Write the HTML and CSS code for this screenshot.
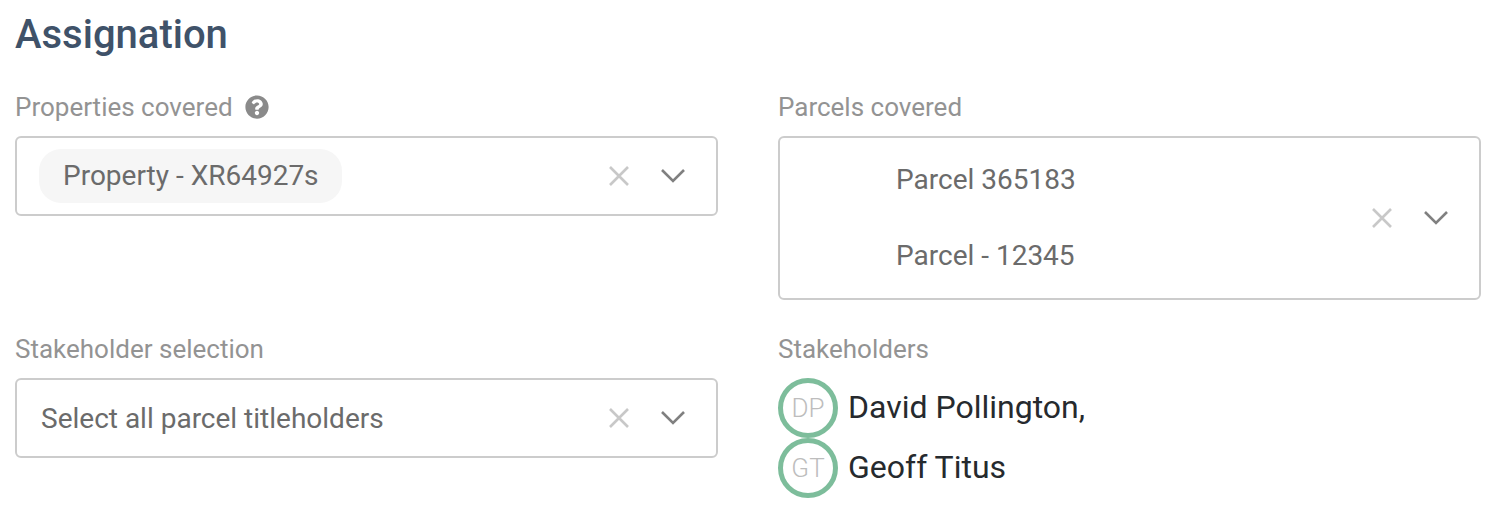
FILE: index.html
```html
<!DOCTYPE html>
<html lang="en">

<head>
    <meta charset="UTF-8">
    <title>Assignation</title>
    <link rel="stylesheet" href="styles.css">
</head>

<body>
    <h2 class="section-title">Assignation</h2>

    <div class="form-grid">
        <div class="field">
            <div class="field-label">
                Properties covered
                <svg class="help-icon" viewBox="0 0 512 512" width="24" height="24">
                    <path fill="#8a8a8a" d="M504 256c0 136.997-111.043 248-248 248S8 392.997 8 256C8 119.083 119.043 8 256 8s248 111.083 248 248zM262.655 90c-54.497 0-89.255 22.957-116.549 63.758-3.536 5.286-2.353 12.415 2.715 16.258l34.699 26.31c5.205 3.947 12.621 3.008 16.665-2.122 17.864-22.658 30.113-35.797 57.303-35.797 20.429 0 45.698 13.148 45.698 32.958 0 14.976-12.363 22.667-32.534 33.976C247.128 238.528 216 254.941 216 296v4c0 6.627 5.373 12 12 12h56c6.627 0 12-5.373 12-12v-1.333c0-28.462 83.186-29.647 83.186-106.667 0-58.002-60.165-102-116.531-102zM256 338c-25.365 0-46 20.635-46 46 0 25.364 20.635 46 46 46s46-20.636 46-46c0-25.365-20.635-46-46-46z" />
                </svg>
            </div>
            <div class="select-box">
                <div class="select-value">
                    <span class="chip">Property - XR64927s</span>
                </div>
                <div class="select-icons">
                    <svg class="clear-icon" viewBox="0 0 20 20" width="20" height="20"><path d="M1 1l18 18M19 1L1 19" /></svg>
                    <svg class="arrow-icon" viewBox="0 0 24 14" width="24" height="14"><path d="M1 1l11 11L23 1" /></svg>
                </div>
            </div>
        </div>

        <div class="field">
            <div class="field-label">Parcels covered</div>
            <div class="select-box">
                <div class="select-value parcels">
                    <span>Parcel 365183</span>
                    <span>Parcel - 12345</span>
                </div>
                <div class="select-icons">
                    <svg class="clear-icon" viewBox="0 0 20 20" width="20" height="20"><path d="M1 1l18 18M19 1L1 19" /></svg>
                    <svg class="arrow-icon" viewBox="0 0 24 14" width="24" height="14"><path d="M1 1l11 11L23 1" /></svg>
                </div>
            </div>
        </div>

        <div class="field">
            <div class="field-label">Stakeholder selection</div>
            <div class="select-box">
                <div class="select-value plain">Select all parcel titleholders</div>
                <div class="select-icons">
                    <svg class="clear-icon" viewBox="0 0 20 20" width="20" height="20"><path d="M1 1l18 18M19 1L1 19" /></svg>
                    <svg class="arrow-icon" viewBox="0 0 24 14" width="24" height="14"><path d="M1 1l11 11L23 1" /></svg>
                </div>
            </div>
        </div>

        <div class="field">
            <div class="field-label">Stakeholders</div>
            <div class="person">
                <span class="avatar">DP</span>
                <span class="person-name">David Pollington,</span>
            </div>
            <div class="person">
                <span class="avatar">GT</span>
                <span class="person-name">Geoff Titus</span>
            </div>
        </div>
    </div>
</body>

</html>
```

FILE: styles.css
```css
* {
    margin: 0;
    padding: 0;
    box-sizing: border-box;
    font-family: Roboto, "Liberation Sans", sans-serif;
}

body {
    background-color: #fff;
    padding: 11px 15px 0 15px;
    overflow: hidden;
}

.section-title {
    font-size: 40px;
    line-height: 48px;
    font-weight: 500;
    color: #3f5269;
    margin-bottom: 34px;
}

.form-grid {
    display: grid;
    grid-template-columns: 703px 703px;
    column-gap: 60px;
    row-gap: 35px;
    align-items: start;
}

.field-label {
    display: flex;
    align-items: center;
    gap: 12px;
    font-size: 26px;
    line-height: 28px;
    color: #939393;
    margin-bottom: 15px;
}

.select-box {
    display: flex;
    align-items: center;
    justify-content: space-between;
    min-height: 80px;
    border: 2px solid #cccccc;
    border-radius: 6px;
    background-color: #fff;
    padding-right: 31px;
}

.select-value {
    font-size: 28px;
    color: #6b6b6b;
    padding-left: 22px;
}

.select-value.plain {
    padding-left: 24px;
}

.chip {
    display: inline-block;
    height: 54px;
    line-height: 54px;
    padding: 0 23px 0 24px;
    border-radius: 22px;
    background-color: #f6f6f6;
}

.parcels {
    display: flex;
    flex-direction: column;
    gap: 38px;
    padding: 23px 0 23px 116px;
    line-height: 38px;
}

.select-icons {
    display: flex;
    align-items: center;
    gap: 32px;
}

.select-icons svg {
    fill: none;
    stroke-width: 2.6;
}

.clear-icon {
    stroke: #c8c8c8;
}

.arrow-icon {
    stroke: #808080;
}

.person {
    display: flex;
    align-items: center;
    gap: 10px;
    height: 60px;
    font-size: 32px;
    color: #262a2e;
}

.person-name {
    margin-bottom: 2px;
}

.avatar {
    display: flex;
    align-items: center;
    justify-content: center;
    width: 60px;
    height: 60px;
    border: 5px solid #7dbd9b;
    border-radius: 50%;
    font-size: 26px;
    font-weight: 300;
    color: #bdbdbd;
}
```
